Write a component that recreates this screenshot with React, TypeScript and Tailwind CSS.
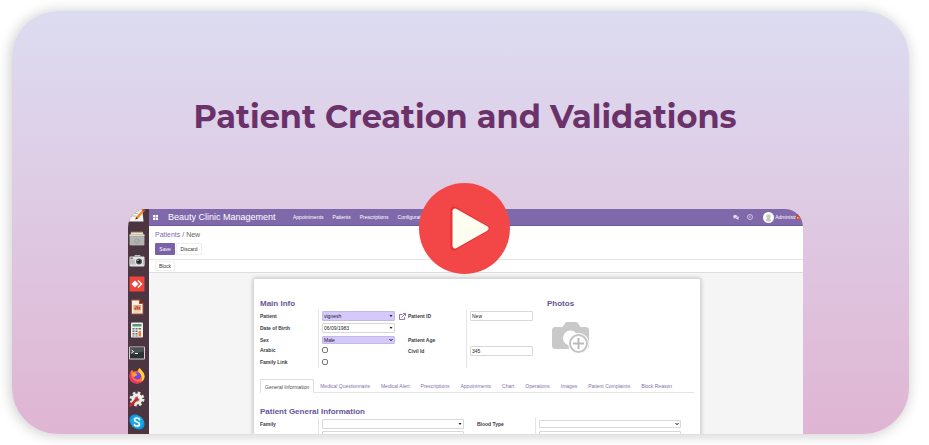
import type { ReactNode } from "react";

function DockIcon({ children }: { children: ReactNode }) {
  return (
    <svg viewBox="0 0 32 32" className="size-4 shrink-0" aria-hidden="true">
      {children}
    </svg>
  );
}

function Dock() {
  return (
    <aside className="flex w-[21px] shrink-0 flex-col items-start gap-[7px] bg-[#4b3541] pl-px">
      <div className="-mt-[2px] h-4">
        <DockIcon>
          <path d="M3 0h23l3 29H0z" fill="#f4f4f1" />
          <path d="M5 8h16M5 13h13M4 18h10" stroke="#b9b9b5" strokeWidth="2" />
          <path d="M29 4l3 3-14 16-5 2 1-5z" fill="#f08a24" />
          <path d="M14 20l4 3-5 2z" fill="#333" />
          <path d="M26 7l3-3 3 3-3 3z" fill="#e2402b" />
        </DockIcon>
      </div>
      <DockIcon>
        <path d="M4 3h24l2 8H2z" fill="#8a6a48" />
        <path d="M4 5h24v4H4z" fill="#f2e3c8" />
        <rect x="1" y="9" width="30" height="22" rx="2" fill="#a0a19d" />
        <path d="M1 9h30v3H1z" fill="#dadad6" />
        <rect x="2" y="13" width="28" height="17" rx="1" fill="#b4b5b1" />
        <circle cx="16" cy="22" r="4" fill="#dcdcd9" stroke="#80817d" strokeWidth="1.5" />
        <path d="M14 22h4" stroke="#666" strokeWidth="1.5" />
      </DockIcon>
      <DockIcon>
        <rect x="1" y="7" width="30" height="20" rx="2" fill="#e2e2df" />
        <path d="M10 7l2-3h10l2 3z" fill="#bcbcb9" />
        <path d="M1 13h30v10H1z" fill="#bdbdba" />
        <rect x="3" y="9" width="5" height="3" fill="#777" />
        <circle cx="20" cy="17" r="8" fill="#ecece9" />
        <circle cx="20" cy="17" r="6" fill="#4a4d50" />
        <circle cx="20" cy="17" r="3" fill="#101820" />
        <circle cx="18" cy="15" r="1.5" fill="#b8d1e0" />
      </DockIcon>
      <DockIcon>
        <rect x="1" y="1" width="30" height="30" rx="1" fill="#ef443b" />
        <path d="M12 9l7 7-7 7-7-7z" fill="#fff" />
        <path d="M17 10l2-2 8 8-8 8-2-2 6-6z" fill="#fff" />
      </DockIcon>
      <DockIcon>
        <path d="M4 1h18l7 7v23H4z" fill="#a5502b" />
        <path d="M6 3h14v7h7v19H6z" fill="#f7efe8" />
        <path d="M22 1l7 7h-7z" fill="#6f2c12" />
        <rect x="9" y="12" width="15" height="11" fill="#dda27e" />
        <path d="M11 21v-4h3v4zM15 21v-7h3v7zM19 21v-5h3v5z" fill="#c0562a" />
        <path d="M9 26h15" stroke="#e2b79c" strokeWidth="2" />
      </DockIcon>
      <DockIcon>
        <rect x="4" y="1" width="24" height="30" rx="2" fill="#f0f0ed" />
        <rect x="7" y="4" width="18" height="5" fill="#4f9b77" />
        <path d="M7 12h4v3H7zM13 12h4v3h-4zM7 17h4v3H7zM13 17h4v3h-4zM7 22h4v3H7zM13 22h4v3h-4zM19 12h5v3h-5zM7 27h4v2H7zM13 27h4v2h-4z" fill="#6b6c6a" />
        <path d="M19 18h5v11h-5z" fill="#ec8136" />
      </DockIcon>
      <DockIcon>
        <rect x="0" y="3" width="32" height="26" rx="2" fill="#d0d1cd" />
        <rect x="2" y="5" width="28" height="22" fill="#2c3133" />
        <path d="M2 5h28v8L2 19z" fill="#4a5053" />
        <path d="M5 10l4 3-4 3M12 17h6" fill="none" stroke="#fff" strokeWidth="2" />
      </DockIcon>
      <DockIcon>
        <path d="M3 8c1-3 3-4 4-4 0 2 2 3 3 3 2-1 5-1 7 0-1-4 3-6 5-7 0 4 9 7 9 17 0 8-6 14-15 14S1 25 1 17c0-4 1-7 2-9z" fill="#ff7139" />
        <path d="M22 0c0 4 9 7 9 17 0 5-3 9-7 11 3-5 3-11-1-15-3-3-7-7-1-13z" fill="#ffd43a" />
        <path d="M1 17c0 8 6 14 15 14 5 0 9-2 12-6-6 4-18 3-22-5C4 16 5 12 3 8c-1 2-2 5-2 9z" fill="#f2316c" />
        <path d="M9 16c0-5 5-8 9-7 4 0 6 4 6 7 0 4-3 7-7 7s-8-3-8-7z" fill="#7542e5" />
        <path d="M6 11c4-3 7 0 11 2-1 3-5 2-6 5-3-1-5-4-5-7z" fill="#ffa436" />
      </DockIcon>
      <DockIcon>
        <circle cx="16" cy="16" r="12" fill="none" stroke="#e4e4e1" strokeWidth="6" strokeDasharray="5 4.4" />
        <circle cx="16" cy="16" r="11" fill="#ececea" />
        <circle cx="16" cy="16" r="5" fill="#8b8285" />
        <path d="M3 29L20 12" stroke="#c9282d" strokeWidth="5" strokeLinecap="round" />
        <path d="M17 10l5-4 1 4 4 1-4 5-5-1z" fill="#f7f7f5" />
      </DockIcon>
      <DockIcon>
        <rect x="1" y="1" width="22" height="22" rx="10" fill="#0a98dd" />
        <rect x="9" y="9" width="22" height="22" rx="10" fill="#0a98dd" />
        <circle cx="16" cy="16" r="13" fill="#18a8ea" />
        <path d="M21 11c-1-2-3-3-5-3-3 0-5 1-5 4 0 5 10 3 10 8 0 3-2 4-5 4-2 0-5-1-5-3" fill="none" stroke="#fff" strokeWidth="3.4" strokeLinecap="round" />
      </DockIcon>
    </aside>
  );
}

function NavBar() {
  return (
    <header className="flex h-[17px] items-center bg-[#8069ab] pb-px text-[5px] leading-[8px] text-white shadow-[inset_0_-1px_0_#70599c]">
      <svg viewBox="0 0 10 10" className="ml-1 size-[5px]" aria-hidden="true">
        <path d="M0 0h4.4v4.4H0zM5.6 0H10v4.4H5.6zM0 5.6h4.4V10H0zM5.6 5.6H10V10H5.6z" fill="#fff" />
      </svg>
      <span className="ml-[10px] w-[125px] whitespace-nowrap text-[9px] leading-[12px]">Beauty Clinic Management</span>
      <nav className="flex flex-1 gap-[9px] whitespace-nowrap">
        <a href="#appointments">Appointments</a>
        <a href="#patients">Patients</a>
        <a href="#prescriptions">Prescriptions</a>
        <a href="#configuration">Configuration</a>
      </nav>
      <div className="flex shrink-0 items-center">
        <svg viewBox="0 0 14 12" className="h-[5px] w-[6px]" aria-hidden="true">
          <path d="M5 0c3 0 5 1.500 5 3.500S8 7 5 7l-4 2 1-3C1 5.500 0 4.500 0 3.500 0 1.500 2 0 5 0z" fill="#e4ddf0" />
          <path d="M11 3c2 .7 3 1.800 3 3s-.8 2-1.500 2.500L13.500 12 9 9.500C7.500 9.500 6 9 5.500 8 9 8 11 6 11 3z" fill="#e4ddf0" />
        </svg>
        <svg viewBox="0 0 12 12" className="ml-2 size-[6px]" aria-hidden="true">
          <circle cx="6" cy="6" r="5" fill="none" stroke="#e4ddf0" strokeWidth="1.500" />
          <path d="M6 3v3.500H4" fill="none" stroke="#e4ddf0" strokeWidth="1.200" />
        </svg>
        <svg viewBox="0 0 22 22" className="ml-[10px] size-[11px]" aria-hidden="true">
          <circle cx="11" cy="11" r="11" fill="#fff" />
          <circle cx="11" cy="9" r="4.500" fill="#c8c8c8" />
          <path d="M6 17c0-3 2-5 5-5s5 2 5 5-10 3-10 0z" fill="#c8c8c8" />
        </svg>
        <span className="ml-px whitespace-nowrap">Administr</span>
        <svg viewBox="0 0 12 12" className="mr-px size-[6px]" aria-hidden="true">
          <path d="M0 3l4-3 2 4 5 1 1 6H1z" fill="#c9452f" />
          <path d="M2 6h3v3H2zM7 7h3v2H7z" fill="#f3c3a4" />
        </svg>
      </div>
    </header>
  );
}

const label = "w-[58px] shrink-0 whitespace-nowrap text-[5px] leading-[8px] font-bold text-[#3c3c44]";
const cell = "flex min-w-0 items-center self-stretch border-l border-[#e4e4e4] pl-[3px]";
const box = "rounded-[1px] border px-px text-[5px] leading-[6px] text-[#222]";
const plain = "border-[#d8d8d8] bg-white";
const required = "border-[#c3b8e8] bg-[#d5c8fb]";

function Caret({ open = false }: { open?: boolean }) {
  return (
    <svg viewBox="0 0 8 6" className="pointer-events-none absolute top-1/2 right-[2px] h-[3px] w-1 -translate-y-1/2" aria-hidden="true">
      {open ? (
        <path d="M1 1l3 3.500L7 1" fill="none" stroke="#222" strokeWidth="2" />
      ) : (
        <path d="M1 1h6L4 5z" fill="#222" />
      )}
    </svg>
  );
}

function TickRow({ id, text, height }: { id: string; text: string; height: string }) {
  return (
    <div className={`flex items-center ${height}`}>
      <label htmlFor={id} className={label}>{text}</label>
      <div className={cell}>
        <input id={id} type="checkbox" className="size-[6px] appearance-none rounded-[2px] border border-[#777] bg-white" />
      </div>
    </div>
  );
}

function MainInfo() {
  return (
    <div className="mt-px flex">
      <div className="w-[148px] shrink-0">
        <div className="flex h-3 items-center">
          <label htmlFor="patient" className={label}>Patient</label>
          <div className={cell}>
            <div className="relative">
              <input id="patient" defaultValue="vignesh" className={`${box} ${required} block h-[10px] w-[73px]`} />
              <Caret />
            </div>
            <svg viewBox="0 0 14 14" className="ml-1 size-[7px] shrink-0" aria-hidden="true">
              <path d="M7 3H1v10h10V8M8 1h5v5M13 1L5 9" fill="none" stroke="#6e5a9e" strokeWidth="1.600" />
            </svg>
          </div>
        </div>
        <div className="flex h-3 items-center">
          <label htmlFor="birth" className={label}>Date of Birth</label>
          <div className={cell}>
            <div className="relative">
              <input id="birth" defaultValue="06/09/1983" className={`${box} ${plain} block h-[10px] w-[73px]`} />
              <Caret />
            </div>
          </div>
        </div>
        <div className="flex h-[11px] items-center">
          <label htmlFor="sex" className={label}>Sex</label>
          <div className={cell}>
            <div className="relative">
              <select id="sex" className={`${box} ${required} block h-2 w-[73px] appearance-none`}>
                <option>Male</option>
                <option>Female</option>
              </select>
              <Caret open />
            </div>
          </div>
        </div>
        <TickRow id="arabic" text="Arabic" height="h-[10px]" />
        <TickRow id="family-link" text="Family Link" height="h-[13px]" />
      </div>
      <div className="w-[138px] shrink-0">
        <div className="flex h-3 items-center">
          <label htmlFor="patient-id" className={label}>Patient ID</label>
          <div className={cell}>
            <input id="patient-id" defaultValue="New" className={`${box} ${plain} h-[10px] w-[63px]`} />
          </div>
        </div>
        <div className="flex h-3">
          <span className={label} />
          <div className={cell} />
        </div>
        <div className="flex h-[11px] items-center">
          <span className={label}>Patient Age</span>
          <div className={cell} />
        </div>
        <div className="flex h-3 items-center">
          <label htmlFor="civil-id" className={label}>Civil Id</label>
          <div className={cell}>
            <input id="civil-id" defaultValue="345" className={`${box} ${plain} h-[10px] w-[63px]`} />
          </div>
        </div>
        <div className="flex h-[11px]">
          <span className={label} />
          <div className={cell} />
        </div>
      </div>
      <svg viewBox="0 0 74 64" className="mt-3 ml-[6px] h-8 w-[37px] shrink-0" role="img" aria-label="Add photo">
        <path d="M7 10h14l6-9q1-1 3-1h18q2 0 3 1l6 9h10q7 0 7 7v30q0 7-7 7H7q-7 0-7-7V17q0-7 7-7z" fill="#c9c9c9" />
        <circle cx="37" cy="32" r="15" fill="#fff" />
        <circle cx="53" cy="43" r="21" fill="#fff" />
        <circle cx="53" cy="43" r="17" fill="#fff" stroke="#c4c4c4" strokeWidth="4" />
        <path d="M53 32v22M42 43h22" stroke="#bcbcbc" strokeWidth="4" />
      </svg>
    </div>
  );
}

const tabs = [
  "Medical Questionnaire",
  "Medical Alert",
  "Prescriptions",
  "Appointments",
  "Chart",
  "Operations",
  "Images",
  "Patient Complaints",
  "Block Reason",
];

function GeneralField({ id, text, native = false }: { id: string; text: string; native?: boolean }) {
  return (
    <div className="flex h-3 items-center">
      <label htmlFor={id} className={label}>{text}</label>
      <div className={cell}>
        <div className="relative">
          {native ? (
            <select id={id} className={`${box} ${plain} block h-2 w-[142px] appearance-none`}>
              <option />
            </select>
          ) : (
            <input id={id} className={`${box} ${plain} block h-[10px] w-[142px]`} />
          )}
          <Caret open={native} />
        </div>
      </div>
    </div>
  );
}

const heading = "text-[8px] leading-[10px] font-bold text-[#6a5499]";

function Sheet() {
  return (
    <section className="mx-auto w-[448px] rounded-t-[2px] border border-[#d8d8d8] bg-white px-[6px] pt-5 shadow-[0_0_4px_rgba(0,0,0,0.22)]">
      <div className="flex">
        <h2 className={`${heading} w-[287px]`}>Main Info</h2>
        <h2 className={heading}>Photos</h2>
      </div>
      <MainInfo />
      <div className="mt-[11px] flex gap-px whitespace-nowrap border-b border-[#e4e4e4] text-[5px] leading-[8px] text-[#8471ae]" role="tablist">
        <button role="tab" aria-selected="true" className="-mb-px h-[14px] border border-b-0 border-[#dedede] bg-white px-1 text-[#4a4a52]">
          General Information
        </button>
        {tabs.map((tab) => (
          <button key={tab} role="tab" aria-selected="false" className="h-[13px] px-[5px]">
            {tab}
          </button>
        ))}
      </div>
      <h2 className={`${heading} mt-[14px]`}>Patient General Information</h2>
      <div className="mt-px flex">
        <div className="w-[217px] shrink-0">
          <GeneralField id="family" text="Family" />
          <GeneralField id="phone" text="Phone" />
        </div>
        <div>
          <GeneralField id="blood" text="Blood Type" native />
          <GeneralField id="language" text="Language" />
        </div>
      </div>
    </section>
  );
}

function AppPreview() {
  return (
    <div className="flex h-[225px] overflow-hidden rounded-t-[18px] bg-[#f5f5f5]">
      <Dock />
      <div className="min-w-0 flex-1">
        <NavBar />
        <div className="border-b border-[#e4e4e4] bg-white px-[6px] pt-1">
          <p className="text-[7px] leading-[10px] text-[#666]">
            <a href="#patients" className="text-[#806aab]">Patients</a> / New
          </p>
          <div className="flex gap-px pt-[3px] pb-1 text-[5px] leading-[8px]">
            <button className="h-3 w-5 rounded-[1px] bg-[#7b62a8] text-white">Save</button>
            <button className="h-3 w-[26px] rounded-[1px] border border-[#eeeeee] bg-white text-[#333]">Discard</button>
          </div>
        </div>
        <div className="flex h-[13px] items-center border-b border-[#dddddd] bg-white px-[6px]">
          <button className="h-[10px] w-5 rounded-[1px] border border-[#eeeeee] text-[5px] leading-[8px] text-[#333]">Block</button>
        </div>
        <div className="pt-[5px] pl-[2px]">
          <Sheet />
        </div>
      </div>
    </div>
  );
}

export default function App() {
  return (
    <main className="bg-white pt-[11px] pr-5 pb-[11px] pl-3 font-['Liberation_Sans',Arial,sans-serif]">
      <article className="rounded-[46px] bg-linear-to-b from-[#dcdcf1] to-[#dfb5d3] pt-[85px] shadow-[-1px_1px_14px_rgba(0,0,0,0.22)]">
        <h1 className="ml-[9px] text-center font-['Montserrat',Inter,sans-serif] text-[32px] leading-[42px] font-bold text-[#6b3169]">
          Patient Creation and Validations
        </h1>
        <div className="relative mt-[71px] mr-[106px] ml-[116px]">
          <AppPreview />
          <button aria-label="Play video" className="absolute -top-[26px] left-1/2 -ml-[47px] size-[91px] rounded-full bg-[#f34747]">
            <svg viewBox="0 0 91 91" className="size-full" aria-hidden="true">
              <path d="M35 27L67 45.500 35 64z" fill="#e92f36" stroke="#e92f36" strokeWidth="7" strokeLinejoin="round" />
              <path d="M36 28L67 45.500 36 63z" fill="#fffdf0" stroke="#fffdf0" strokeWidth="5" strokeLinejoin="round" />
            </svg>
          </button>
        </div>
      </article>
    </main>
  );
}
